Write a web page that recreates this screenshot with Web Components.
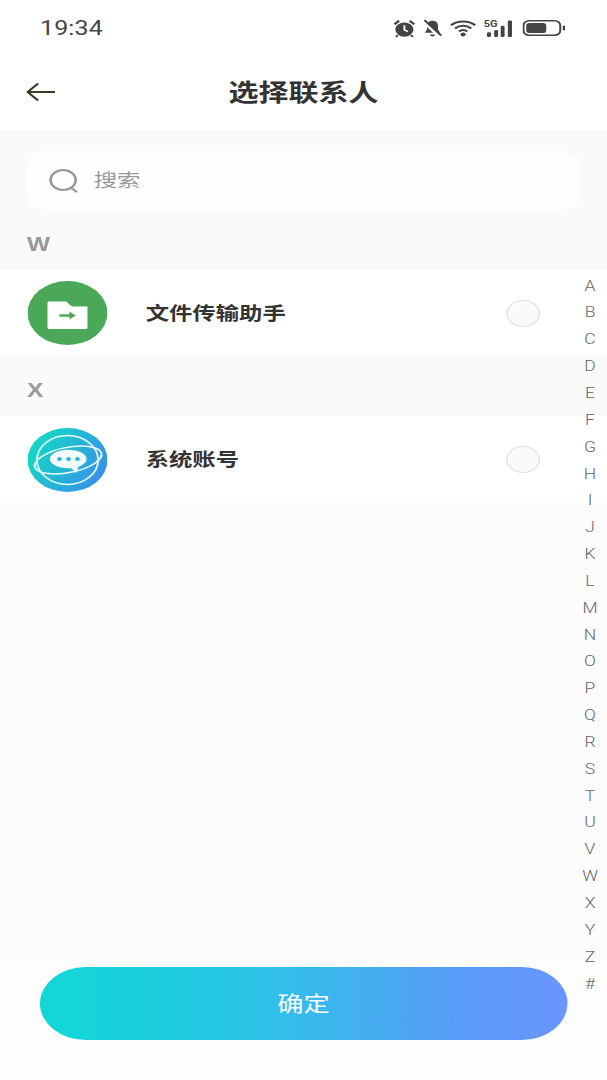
<!DOCTYPE html>
<html lang="zh">
<head>
<meta charset="utf-8">
<title>选择联系人</title>
<style>
  html, body { margin: 0; padding: 0; width: 607px; height: 1080px; overflow: hidden; background: #fcfcfc; }
</style>
</head>
<body>
<contact-picker></contact-picker>
<script>
(() => {
  const CJK = '"Noto Sans CJK SC", "Noto Sans", sans-serif';
  const LETTERS = "ABCDEFGHIJKLMNOPQRSTUVWXYZ#".split("");

  function define(name, css, html) {
    customElements.define(name, class extends HTMLElement {
      constructor() {
        super();
        this.attachShadow({ mode: "open" }).innerHTML = `<style>${css}</style>${html}`;
      }
    });
  }

  define("status-bar", `
    :host { display: flex; align-items: center; height: 56px; padding: 0 33px 0 32px; background: #fff; color: #444; }
    .time { flex: 1; font: 400 20px/1 Roboto, sans-serif; letter-spacing: .1px; }
    .icons { display: flex; align-items: center; gap: 6px; }
    svg { display: block; }
  `, `
    <span class="time">19:34</span>
    <div class="icons">
      <svg width="17" height="19" viewBox="0 0 16 18" fill="#444" preserveAspectRatio="none">
        <circle cx="8" cy="10" r="6.800"/>
        <path d="M8 6v4.200l2.600 1.800" fill="none" stroke="#fff" stroke-width="1.400"/>
        <path d="M.6 5 4 1.600M15.400 5 12 1.600" stroke="#444" stroke-width="2" fill="none"/>
        <path d="M3 15.400 1.600 17M13 15.400l1.400 1.600" stroke="#444" stroke-width="1.800"/>
      </svg>
      <svg width="16" height="19" viewBox="0 0 16 18" fill="#444" preserveAspectRatio="none">
        <path d="M8 1.600c-2.800 0-4.400 2-4.400 5v3.600L1.800 13h12.400l-1.800-2.800V6.600c0-3-1.600-5-4.400-5Z"/>
        <path d="M6 14.600h4a2 2 0 0 1-4 0Z"/>
        <path d="M.8 2.600 13.600 16.600" stroke="#fff" stroke-width="2.600"/>
        <path d="M1.600 1 15 15.800" stroke="#444" stroke-width="1.800"/>
      </svg>
      <svg width="21" height="18" viewBox="0 0 21 18" fill="none" stroke="#444" stroke-width="2">
        <path d="M.8 6.200C6.200 1.200 14.800 1.200 20.200 6.200"/>
        <path d="M4 9.400c3.800-3.400 9.200-3.400 13 0"/>
        <path d="M7.200 12.400c2-1.700 4.600-1.700 6.600 0"/>
        <circle cx="10.500" cy="15.400" r="2" fill="#444" stroke="none"/>
      </svg>
      <svg width="25" height="19" viewBox="0 0 24 18" fill="#444" preserveAspectRatio="none">
        <text x="0" y="7.500" font-family="Roboto, sans-serif" font-size="8.500" font-weight="700">5G</text>
        <rect x="2.500" y="12.500" width="3" height="4.500" rx="1"/>
        <rect x="8" y="10.500" width="3" height="6.500" rx="1"/>
        <rect x="13" y="6.500" width="3" height="10.500" rx="1"/>
        <rect x="18.500" y="1.500" width="3.200" height="15.500" rx="1"/>
      </svg>
      <svg width="35" height="18" viewBox="0 0 35 18">
        <rect x=".8" y="1.800" width="29.400" height="14.400" rx="4.500" fill="none" stroke="#444" stroke-width="1.600"/>
        <rect x="3" y="4" width="16" height="10" rx="2.500" fill="#444"/>
        <rect x="32.200" y="6.500" width="1.800" height="5" rx=".9" fill="#444"/>
      </svg>
    </div>
  `);

  define("nav-bar", `
    :host { display: grid; grid-template-columns: 1fr auto 1fr; align-items: center; height: 74px; padding: 0 21px; background: #fff; }
    h1 { margin: -4px 0 0; font: 700 24px/1 ${CJK}; color: #333; }
    svg { display: block; margin-top: -2px; }
  `, `
    <svg width="23" height="20" viewBox="0 0 23 20" fill="none" stroke="#3a3a28" stroke-width="1.800">
      <path d="M23 10H1M9.500 1.500 1 10l8.500 8.500"/>
    </svg>
    <h1><slot></slot></h1>
    <span></span>
  `);

  define("search-box", `
    :host { display: flex; align-items: center; gap: 12px; height: 59px; margin: 21px 22px 0 21px; padding-left: 18px; background: #fefefe; border-radius: 16px; }
    span { margin-top: -2px; font: 400 18.700px/1 ${CJK}; color: #999; }
    svg { display: block; }
  `, `
    <svg width="24" height="26" viewBox="0 0 24 26" fill="none" stroke="#999" stroke-width="2.200">
      <circle cx="11.500" cy="12" r="10"/>
      <path d="m18 20 4 3.500" stroke-linecap="round"/>
    </svg>
    <span><slot></slot></span>
  `);

  define("section-label", `
    :host { display: flex; align-items: center; box-sizing: border-box; height: 60px; padding: 9px 0 0 21.500px; font: 700 19.500px/1 "Liberation Sans", sans-serif; color: #999; }
  `, `<slot></slot>`);

  define("contact-row", `
    :host { display: flex; align-items: center; height: var(--row-h, 86px); padding-left: 21.500px; background: #fff; }
    .avatar { width: 64px; height: 64px; flex: none; }
    .name { flex: 1; margin: -2px 0 0 31px; font: 700 18.700px/1 ${CJK}; color: #333; }
    .radio { box-sizing: border-box; width: 27px; height: 27px; margin-right: 53.500px; border-radius: 50%; border: 1.500px solid #e0e0e0; background: #fafafa; }
  `, `
    <div class="avatar"><slot name="avatar"></slot></div>
    <div class="name"><slot></slot></div>
    <div class="radio"></div>
  `);

  define("alpha-index", `
    :host { position: absolute; top: 272.600px; left: 460px; width: 24px; font: 300 14px/26.850px Roboto, sans-serif; color: #666; text-align: center; }
    div { height: 26.850px; }
  `, LETTERS.map((c) => `<div>${c}</div>`).join(""));

  define("confirm-button", `
    :host { display: flex; align-items: center; justify-content: center; height: 73px; margin: 0 32px 40px; border-radius: 36.500px; background: linear-gradient(90deg, #10d8d6 0%, #2ac4e6 40%, #5a9cf8 80%, #6a94ff 100%); color: #fff; font: 400 21px/1 ${CJK}; }
    span { margin-top: -2px; }
  `, `<span><slot></slot></span>`);

  // reference is a horizontally stretched capture, so lay out at 607/1.25 and stretch the whole page
  define("contact-picker", `
    :host { display: flex; flex-direction: column; position: relative; width: 485.600px; height: 1080px; transform: scaleX(1.25); transform-origin: 0 0; background: #fafafa; }
    .fill { flex: 1; background: #fcfcfc; }
    .foot { background: #fdfdfd; }
    svg { display: block; }
  `, `
    <status-bar></status-bar>
    <nav-bar>选择联系人</nav-bar>
    <search-box>搜索</search-box>
    <section-label>W</section-label>
    <contact-row>
      <svg slot="avatar" width="64" height="64" viewBox="0 0 64 64">
        <circle cx="32" cy="32" r="32" fill="#4aa858"/>
        <path d="M16 22a2 2 0 0 1 .6-1.500H31l4.500 5H48V46.500a1.500 1.500 0 0 1-1.500 1.500h-29a1.500 1.500 0 0 1-1.500-1.500Z" fill="#fff"/>
        <path d="M25.500 34.500h9.500" stroke="#4aa858" stroke-width="2.600"/>
        <path d="m33.500 30.500 5 4-5 4Z" fill="#4aa858"/>
      </svg>
      文件传输助手
    </contact-row>
    <section-label>X</section-label>
    <contact-row style="--row-h:87px">
      <svg slot="avatar" width="64" height="64" viewBox="0 0 64 64">
        <defs>
          <linearGradient id="logo" x1="0" y1=".25" x2="1" y2=".75">
            <stop offset="0" stop-color="#10dcc4"/>
            <stop offset="1" stop-color="#3a8ee8"/>
          </linearGradient>
        </defs>
        <circle cx="32" cy="32" r="32" fill="url(#logo)"/>
        <circle cx="32" cy="32" r="24.500" fill="none" stroke="#e8fbfb" stroke-width="1.500"/>
        <ellipse cx="32.500" cy="32" rx="27.500" ry="12.500" transform="rotate(-15 32.500 32)" fill="none" stroke="#e8fbfb" stroke-width="1.600"/>
        <ellipse cx="32.500" cy="31" rx="16" ry="10.500" fill="#25b8d4"/>
        <ellipse cx="32.500" cy="31" rx="14.700" ry="9.200" fill="#f4fbfd"/>
        <path d="M33 38 39 45l2.500-9Z" fill="#f4fbfd"/>
        <circle cx="25.600" cy="31" r="1.900" fill="#2bb4d8"/>
        <circle cx="32.800" cy="31" r="1.900" fill="#2bb4d8"/>
        <circle cx="40" cy="31" r="1.900" fill="#2bb4d8"/>
      </svg>
      系统账号
    </contact-row>
    <div class="fill"></div>
    <div class="foot"><confirm-button>确定</confirm-button></div>
    <alpha-index></alpha-index>
  `);
})();
</script>
</body>
</html>
